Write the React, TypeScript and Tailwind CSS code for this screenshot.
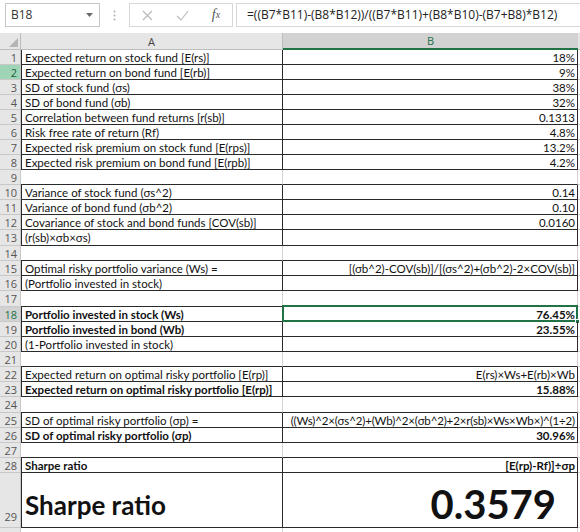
import React from "react";

type Row = {
  n: number;
  a?: string;
  b?: string;
  boxed?: boolean;
  bold?: boolean;
  h?: number;
  tight?: boolean;
};

const ROWS: Row[] = [
  { n: 1, a: "Expected return on stock fund [E(rs)]", b: "18%", boxed: true },
  { n: 2, a: "Expected return on bond fund [E(rb)]", b: "9%", boxed: true },
  { n: 3, a: "SD of stock fund (σs)", b: "38%", boxed: true },
  { n: 4, a: "SD of bond fund (σb)", b: "32%", boxed: true },
  { n: 5, a: "Correlation between fund returns [r(sb)]", b: "0.1313", boxed: true },
  { n: 6, a: "Risk free rate of return (Rf)", b: "4.8%", boxed: true },
  { n: 7, a: "Expected risk premium on stock fund [E(rps)]", b: "13.2%", boxed: true },
  { n: 8, a: "Expected risk premium on bond fund [E(rpb)]", b: "4.2%", boxed: true },
  { n: 9 },
  { n: 10, a: "Variance of stock fund (σs^2)", b: "0.14", boxed: true },
  { n: 11, a: "Variance of bond fund (σb^2)", b: "0.10", boxed: true },
  { n: 12, a: "Covariance of stock and bond funds [COV(sb)]", b: "0.0160", boxed: true },
  { n: 13, a: "(r(sb)×σb×σs)", boxed: true, h: 16 },
  { n: 14 },
  { n: 15, a: "Optimal risky portfolio variance (Ws) =", b: "[(σb^2)-COV(sb)]/[(σs^2)+(σb^2)-2×COV(sb)]", boxed: true },
  { n: 16, a: "(Portfolio invested in stock)", boxed: true },
  { n: 17, h: 16 },
  { n: 18, a: "Portfolio invested in stock (Ws)", b: "76.45%", boxed: true, bold: true },
  { n: 19, a: "Portfolio invested in bond (Wb)", b: "23.55%", boxed: true, bold: true },
  { n: 20, a: "(1-Portfolio invested in stock)", boxed: true },
  { n: 21 },
  { n: 22, a: "Expected return on optimal risky portfolio [E(rp)]", b: "E(rs)×Ws+E(rb)×Wb", boxed: true },
  { n: 23, a: "Expected return on optimal risky portfolio [E(rp)]", b: "15.88%", boxed: true, bold: true },
  { n: 24, h: 16 },
  { n: 25, a: "SD of optimal risky portfolio (σp) =", b: "((Ws)^2×(σs^2)+(Wb)^2×(σb^2)+2×r(sb)×Ws×Wb×)^(1÷2)", boxed: true, tight: true },
  { n: 26, a: "SD of optimal risky portfolio (σp)", b: "30.96%", boxed: true, bold: true },
  { n: 27 },
  { n: 28, a: "Sharpe ratio", b: "[E(rp)-Rf)]÷σp", boxed: true, bold: true },
];

function FormulaBar() {
  return (
    <div className="h-[33px] bg-white flex items-start pt-[3px] font-['Open_Sans',sans-serif] text-[12px] text-[#333]">
      <div className="ml-[5px] w-[95px] h-[24px] border border-[#c6c6c6] flex items-center justify-between pl-[5px] pr-[6px]">
        <span>B18</span>
        <svg width="7" height="4" viewBox="0 0 7 4"><path d="M0 0h7L3.5 4z" fill="#6b6b6b" /></svg>
      </div>
      <div className="w-[29px] h-[24px] flex items-center justify-center">
        <svg width="3" height="11" viewBox="0 0 3 11">
          <circle cx="1.5" cy="1.5" r="1" fill="#b0b0b0" />
          <circle cx="1.5" cy="5.5" r="1" fill="#b0b0b0" />
          <circle cx="1.5" cy="9.5" r="1" fill="#b0b0b0" />
        </svg>
      </div>
      <div className="w-[104px] h-[24px] border border-[#d8d8d8] flex items-center">
        <div className="w-[34px] flex justify-center">
          <svg width="11" height="11" viewBox="0 0 11 11"><path d="M1 1l9 9M10 1l-9 9" stroke="#b8b8b8" strokeWidth="1.1" /></svg>
        </div>
        <div className="w-[36px] flex justify-center">
          <svg width="13" height="11" viewBox="0 0 13 11"><path d="M1 6l4 4 7-9" stroke="#b8b8b8" strokeWidth="1.1" fill="none" /></svg>
        </div>
        <div className="w-[32px] flex justify-center font-['Liberation_Serif',serif] italic text-[14px] text-[#555]">
          f<span className="text-[10px] relative top-[2px]">x</span>
        </div>
      </div>
      <div className="ml-[3px] flex-1 h-[24px] border border-[#d8d8d8] border-r-0 flex items-center pl-[10px] whitespace-nowrap overflow-hidden text-[#222]">
        =((B7*B11)-(B8*B12))/((B7*B11)+(B8*B10)-(B7+B8)*B12)
      </div>
    </div>
  );
}

function HeaderRow() {
  return (
    <div className="h-[17px] flex bg-[#e6e6e6] font-['Open_Sans',sans-serif] text-[11px] text-[#444]">
      <div className="w-[21px] border-r border-b border-[#bdbdbd] flex items-end justify-end p-[2px]">
        <svg width="9" height="9" viewBox="0 0 9 9"><path d="M9 0v9H0z" fill="#b5b5b5" /></svg>
      </div>
      <div className="w-[262px] border-r border-b border-[#bdbdbd] flex items-center justify-center">A</div>
      <div className="w-[295px] bg-[#d2d2d2] border-b-2 border-[#217346] flex items-center justify-center text-[#217346]">B</div>
      <div className="flex-1 border-b border-[#bdbdbd]" />
    </div>
  );
}

function SheetRow({ row, nextBoxed }: { row: Row; nextBoxed: boolean }) {
  const h = row.h ?? 15;
  const dark = row.boxed || nextBoxed;
  const selected = row.n === 18;
  return (
    <div className="flex" style={{ height: h }}>
      <div
        className={`w-[21px] border-r border-b border-[#c8c8c8] flex items-center justify-end pr-[3px] text-[11px] font-['Open_Sans',sans-serif] ${
          row.n === 2 ? "bg-[#9fd5b7] text-[#1e5c3a]" : selected ? "bg-[#d2d2d2] text-[#217346]" : "bg-[#e6e6e6] text-[#555]"
        }`}
      >
        {row.n}
      </div>
      <div
        className={`w-[262px] border-b border-r flex items-center pl-[3px] pt-[1px] whitespace-nowrap overflow-hidden ${
          row.boxed ? "border-l border-l-[#2a2a2a] border-r-[#2a2a2a]" : "border-r-[#d4d4d4]"
        } ${dark ? "border-b-[#2a2a2a]" : "border-b-[#d4d4d4]"} ${row.bold ? "font-bold" : ""}`}
      >
        {row.a}
      </div>
      <div
        className={`relative w-[295px] border-b border-r flex items-center justify-end pr-[2px] pt-[1px] whitespace-nowrap ${
          row.boxed ? "border-r-[#2a2a2a]" : "border-r-[#d4d4d4]"
        } ${dark ? "border-b-[#2a2a2a]" : "border-b-[#d4d4d4]"} ${row.bold ? "font-bold" : ""} ${
          row.tight ? "tracking-[-0.15px]" : ""
        }`}
      >
        {row.b}
        {selected && (
          <div className="absolute -left-[1px] -top-[2px] right-[-1px] bottom-[-1px] border-2 border-[#217346]">
            <div className="absolute -right-[4px] -bottom-[4px] w-[5px] h-[5px] bg-[#217346] border border-white" />
          </div>
        )}
      </div>
      <div className="flex-1 border-b border-[#d4d4d4]" />
    </div>
  );
}

export default function App() {
  return (
    <div className="w-[580px] h-[532px] overflow-hidden bg-white text-[#111] font-['Lato',sans-serif] text-[11.5px] leading-none">
      <FormulaBar />
      <HeaderRow />
      {ROWS.map((r, i) => (
        <SheetRow key={r.n} row={r} nextBoxed={!!ROWS[i + 1]?.boxed || r.n === 28} />
      ))}
      <div className="flex h-[55px]">
        <div className="w-[21px] bg-[#e6e6e6] border-r border-b border-[#c8c8c8] flex items-end justify-end pr-[3px] pb-[5px] text-[11px] text-[#555] font-['Open_Sans',sans-serif]">
          29
        </div>
        <div className="w-[262px] border-l border-r border-b border-[#2a2a2a] flex items-end pl-[3px] pb-[9px] font-bold text-[26px]">
          Sharpe ratio
        </div>
        <div className="w-[295px] border-r border-b border-[#2a2a2a] flex items-end justify-end pr-[21px] pb-[3px] font-bold text-[40px]">
          0.3579
        </div>
        <div className="flex-1 border-b border-[#d4d4d4]" />
      </div>
      <div className="flex h-[10px]">
        <div className="w-[21px] bg-[#e6e6e6] border-r border-[#c8c8c8]" />
        <div className="w-[262px] border-r border-[#d4d4d4]" />
        <div className="w-[295px] border-r border-[#d4d4d4]" />
      </div>
    </div>
  );
}
